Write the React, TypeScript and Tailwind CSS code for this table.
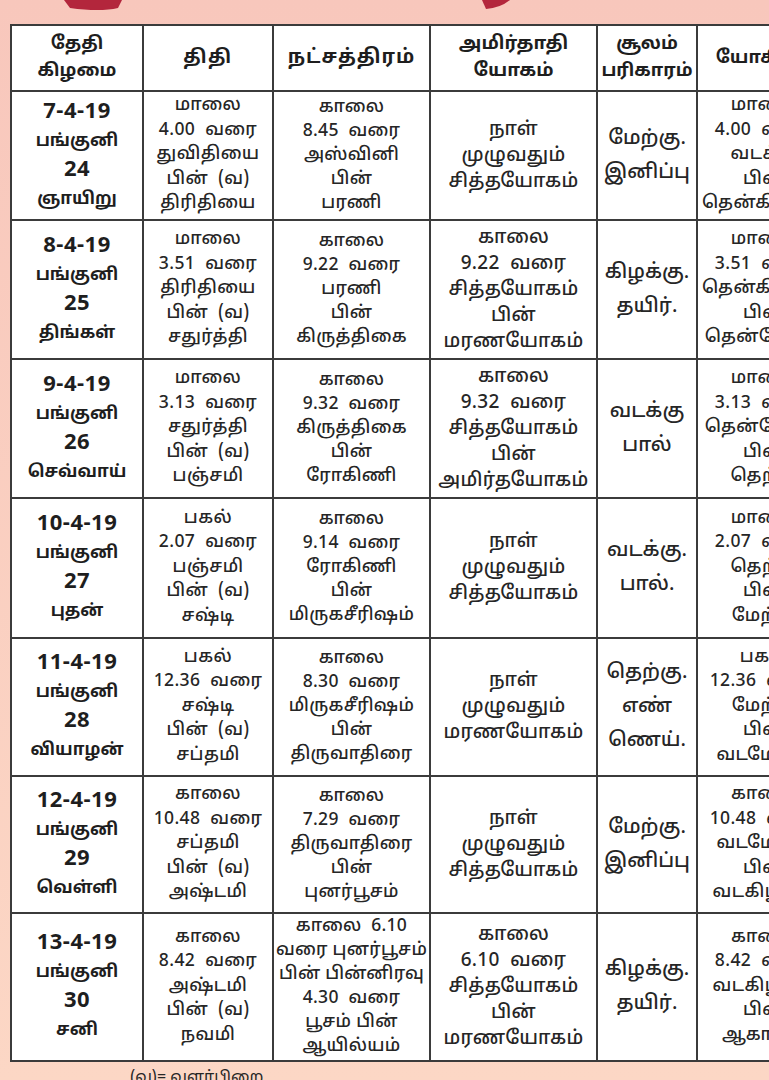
import React from 'react'

type Row = {
  date: string[]
  thithi: string[]
  star: string[]
  yogam: string[]
  soolam: string[]
  yogini: string[]
}

const headers: string[][] = [
  ['தேதி', 'கிழமை'],
  ['திதி'],
  ['நட்சத்திரம்'],
  ['அமிர்தாதி', 'யோகம்'],
  ['சூலம்', 'பரிகாரம்'],
  ['யோகினி'],
]

const rows: Row[] = [
  {
    date: ['7-4-19', 'பங்குனி', '24', 'ஞாயிறு'],
    thithi: ['மாலை', '4.00  வரை', 'துவிதியை', 'பின்  (வ)', 'திரிதியை'],
    star: ['காலை', '8.45  வரை', 'அஸ்வினி', 'பின்', 'பரணி'],
    yogam: ['நாள்', 'முழுவதும்', 'சித்தயோகம்'],
    soolam: ['மேற்கு.', 'இனிப்பு'],
    yogini: ['மாலை', '4.00  வரை', 'வடக்கு', 'பின்', 'தென்கிழக்கு'],
  },
  {
    date: ['8-4-19', 'பங்குனி', '25', 'திங்கள்'],
    thithi: ['மாலை', '3.51  வரை', 'திரிதியை', 'பின்  (வ)', 'சதுர்த்தி'],
    star: ['காலை', '9.22  வரை', 'பரணி', 'பின்', 'கிருத்திகை'],
    yogam: ['காலை', '9.22  வரை', 'சித்தயோகம்', 'பின்', 'மரணயோகம்'],
    soolam: ['கிழக்கு.', 'தயிர்.'],
    yogini: ['மாலை', '3.51  வரை', 'தென்கிழக்கு', 'பின்', 'தென்மேற்கு'],
  },
  {
    date: ['9-4-19', 'பங்குனி', '26', 'செவ்வாய்'],
    thithi: ['மாலை', '3.13  வரை', 'சதுர்த்தி', 'பின்  (வ)', 'பஞ்சமி'],
    star: ['காலை', '9.32  வரை', 'கிருத்திகை', 'பின்', 'ரோகிணி'],
    yogam: ['காலை', '9.32  வரை', 'சித்தயோகம்', 'பின்', 'அமிர்தயோகம்'],
    soolam: ['வடக்கு', 'பால்'],
    yogini: ['மாலை', '3.13  வரை', 'தென்மேற்கு', 'பின்', 'தெற்கு'],
  },
  {
    date: ['10-4-19', 'பங்குனி', '27', 'புதன்'],
    thithi: ['பகல்', '2.07  வரை', 'பஞ்சமி', 'பின்  (வ)', 'சஷ்டி'],
    star: ['காலை', '9.14  வரை', 'ரோகிணி', 'பின்', 'மிருகசீரிஷம்'],
    yogam: ['நாள்', 'முழுவதும்', 'சித்தயோகம்'],
    soolam: ['வடக்கு.', 'பால்.'],
    yogini: ['மாலை', '2.07  வரை', 'தெற்கு', 'பின்', 'மேற்கு'],
  },
  {
    date: ['11-4-19', 'பங்குனி', '28', 'வியாழன்'],
    thithi: ['பகல்', '12.36  வரை', 'சஷ்டி', 'பின்  (வ)', 'சப்தமி'],
    star: ['காலை', '8.30  வரை', 'மிருகசீரிஷம்', 'பின்', 'திருவாதிரை'],
    yogam: ['நாள்', 'முழுவதும்', 'மரணயோகம்'],
    soolam: ['தெற்கு.', 'எண்', 'ணெய்.'],
    yogini: ['பகல்', '12.36  வரை', 'மேற்கு', 'பின்', 'வடமேற்கு'],
  },
  {
    date: ['12-4-19', 'பங்குனி', '29', 'வெள்ளி'],
    thithi: ['காலை', '10.48  வரை', 'சப்தமி', 'பின்  (வ)', 'அஷ்டமி'],
    star: ['காலை', '7.29  வரை', 'திருவாதிரை', 'பின்', 'புனர்பூசம்'],
    yogam: ['நாள்', 'முழுவதும்', 'சித்தயோகம்'],
    soolam: ['மேற்கு.', 'இனிப்பு'],
    yogini: ['காலை', '10.48  வரை', 'வடமேற்கு', 'பின்', 'வடகிழக்கு'],
  },
  {
    date: ['13-4-19', 'பங்குனி', '30', 'சனி'],
    thithi: ['காலை', '8.42  வரை', 'அஷ்டமி', 'பின்  (வ)', 'நவமி'],
    star: ['காலை  6.10', 'வரை புனர்பூசம்', 'பின் பின்னிரவு', '4.30  வரை', 'பூசம் பின்', 'ஆயில்யம்'],
    yogam: ['காலை', '6.10  வரை', 'சித்தயோகம்', 'பின்', 'மரணயோகம்'],
    soolam: ['கிழக்கு.', 'தயிர்.'],
    yogini: ['காலை', '8.42  வரை', 'வடகிழக்கு', 'பின்', 'ஆகாயம்'],
  },
]

const font = 'font-["Noto_Sans_Tamil","Lohit_Tamil","Noto_Sans",sans-serif]'

function Cell({ lines, className = '' }: { lines: string[]; className?: string }) {
  return (
    <div className={`bg-white flex flex-col items-center justify-center text-center whitespace-pre ${className}`}>
      {lines.map((l, i) => (
        <span key={i}>{l}</span>
      ))}
    </div>
  )
}

function DateCell({ lines }: { lines: string[] }) {
  return (
    <div className="bg-white flex flex-col items-center justify-center text-center font-bold text-[#1e1e1e]">
      {lines.map((l, i) => (
        <span key={i} className={i % 2 === 0 ? 'text-[22px] leading-[29px] tracking-[0.5px]' : 'text-[17px] leading-[29px]'}>
          {l}
        </span>
      ))}
    </div>
  )
}

// header sizes differ a little per column in the print
const headerSize = [
  'text-[18px]',
  'text-[19px] tracking-[1.5px]',
  'text-[19.5px] tracking-[1px]',
  'text-[18.5px]',
  'text-[18px]',
  'text-[18px]',
]

export default function App() {
  return (
    <div className={`w-[769px] h-[1080px] overflow-hidden bg-gradient-to-b from-[#f8c7bc] to-[#fcd7c5] text-[#262626] ${font}`}>
      {/* top ribbon bits */}
      <svg width="769" height="24" className="block">
        <path d="M64 0 L122 0 L118 8 Q100 12 70 8 Z" fill="#b3263c" />
        <path d="M482 0 L510 0 Q500 8 486 9 Z" fill="#b3263c" />
      </svg>

      <div className="ml-[10px] w-[830px] bg-[#3b3b3b] p-[2px] grid gap-[2px] grid-cols-[130px_128px_155px_165px_98px_132px] grid-rows-[64px_127px_137px_137px_138px_136px_135px_146px]">
        {headers.map((h, i) => (
          <Cell key={i} lines={h} className={`leading-[27px] font-bold text-[#1e1e1e] ${headerSize[i]}`} />
        ))}
        {rows.map((r, i) => (
          <React.Fragment key={i}>
            <DateCell lines={r.date} />
            <Cell lines={r.thithi} className="text-[17.5px] leading-[24.5px] tracking-[0.4px] font-medium" />
            <Cell lines={r.star} className="text-[17.5px] leading-[24px] tracking-[0.3px] font-medium" />
            <Cell lines={r.yogam} className="text-[19px] leading-[26px] tracking-[0.3px] font-medium" />
            <Cell lines={r.soolam} className="text-[20px] leading-[34px] font-medium" />
            <Cell lines={r.yogini} className="text-[17.5px] leading-[24.5px] tracking-[0.4px] font-medium" />
          </React.Fragment>
        ))}
      </div>

      <div className="pl-[130px] pt-[6px] text-[16px] leading-[20px]">(வ)= வளர்பிறை</div>
    </div>
  )
}
